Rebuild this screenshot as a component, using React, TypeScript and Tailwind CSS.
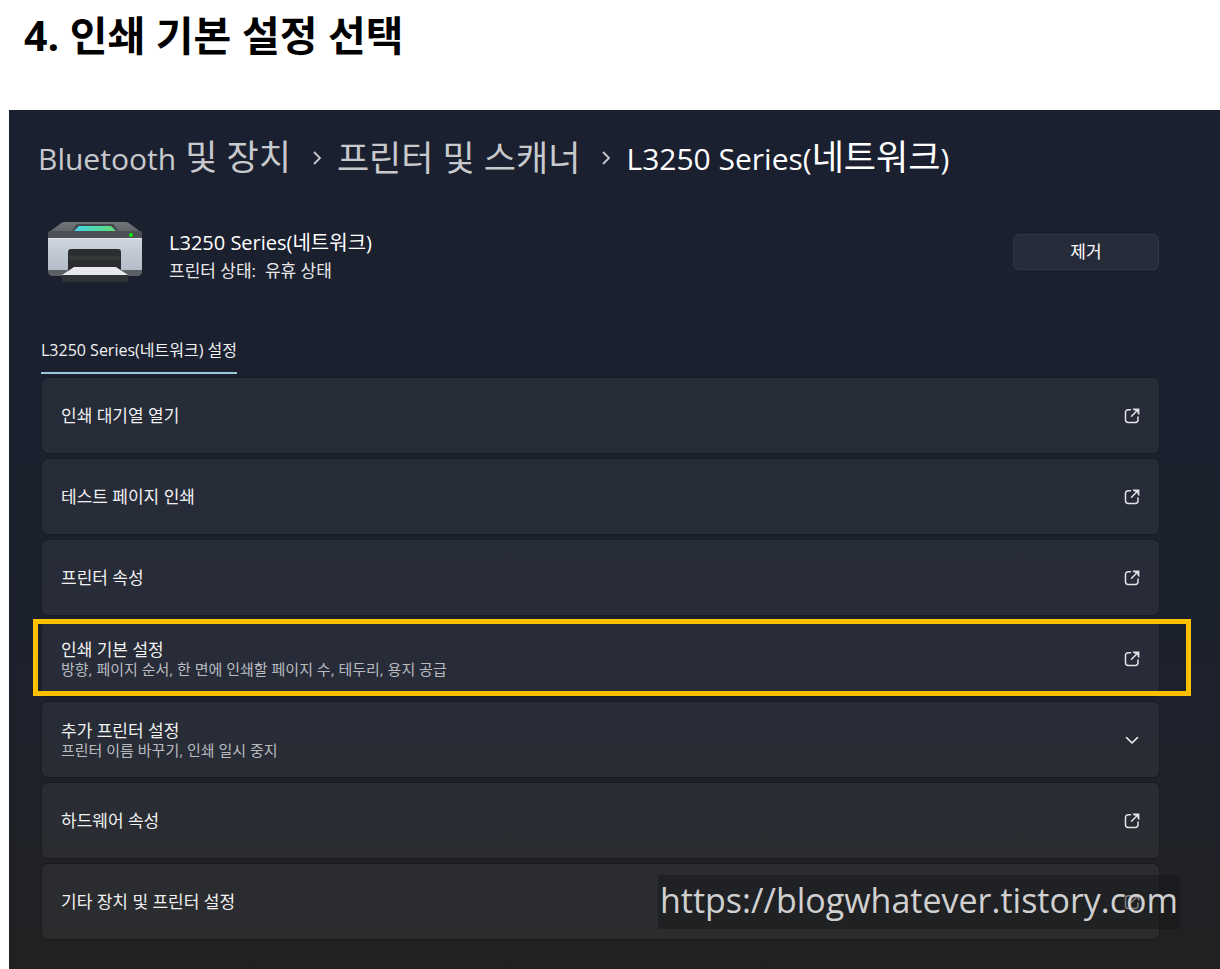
import clsx from "clsx";

interface SettingItem {
    title: string;
    description?: string;
    expandable?: boolean;
    highlighted?: boolean;
    watermark?: boolean;
}

const items: Array<SettingItem> = [
    { title: "인쇄 대기열 열기" },
    { title: "테스트 페이지 인쇄" },
    { title: "프린터 속성" },
    {
        title: "인쇄 기본 설정",
        description: "방향, 페이지 순서, 한 면에 인쇄할 페이지 수, 테두리, 용지 공급",
        highlighted: true,
    },
    {
        title: "추가 프린터 설정",
        description: "프린터 이름 바꾸기, 인쇄 일시 중지",
        expandable: true,
    },
    { title: "하드웨어 속성" },
    { title: "기타 장치 및 프린터 설정", watermark: true },
];

function OpenIcon() {
    return (
        <svg width="16" height="16" viewBox="0 0 16 16" fill="none" stroke="#e4e4e7" strokeWidth="1.5" aria-hidden="true">
            <path d="M6.5 1.7H4.2A2.7 2.7 0 0 0 1.5 4.4V11.8a2.7 2.7 0 0 0 2.7 2.7h7.1A2.7 2.7 0 0 0 14 11.8V9" strokeLinecap="round" />
            <path d="M7.5 8.2L13.5 2.2" strokeLinecap="round" />
            <path d="M8.6 .4H15.4V7L13.8 6 13.2 3.2 9.6 2.2Z" fill="#e4e4e7" stroke="none" />
        </svg>
    );
}

function ChevronIcon() {
    return (
        <svg width="16" height="16" viewBox="0 0 16 16" fill="none" stroke="currentColor" strokeWidth="1.6" strokeLinecap="round" strokeLinejoin="round" aria-hidden="true">
            <path d="M2.5 5.5L8 11l5.5-5.5" />
        </svg>
    );
}

function Separator() {
    return (
        <svg className="mr-3.5 ml-5 shrink-0" width="12" height="16" viewBox="0 0 12 16" fill="none" stroke="#c8c9cd" strokeWidth="1.8" aria-hidden="true">
            <path d="M3 2L9 8 3 14" />
        </svg>
    );
}

function PrinterIcon() {
    return (
        <svg className="shrink-0" width="94" height="62" viewBox="0 0 94 62" aria-hidden="true">
            <defs>
                <linearGradient id="lid" x1="0" y1="0" x2="0" y2="1">
                    <stop offset="0" stopColor="#72777c" />
                    <stop offset="1" stopColor="#5f6367" />
                </linearGradient>
                <linearGradient id="screen" x1="0" y1="0" x2="1" y2="0">
                    <stop offset="0" stopColor="#43d5ea" />
                    <stop offset="1" stopColor="#5fdc72" />
                </linearGradient>
                <linearGradient id="body" x1="0" y1="0" x2="0" y2="1">
                    <stop offset="0" stopColor="#cdd5de" />
                    <stop offset="1" stopColor="#b3bcc8" />
                </linearGradient>
            </defs>
            <path d="M16 1H78Q80 1 82 3L93 11H1L12 3Q14 1 16 1Z" fill="url(#lid)" />
            <path d="M30 3H64Q66 3 67 5L70 10H24L28 4Q29 3 30 3Z" fill="#44484c" />
            <path d="M31 5H63L68 10H26Z" fill="url(#screen)" />
            <path d="M2 10H92Q94 10 94 12V17H0V12Q0 10 2 10Z" fill="#4b4f53" />
            <circle cx="83" cy="14" r="2" fill="#0cf10c" />
            <path d="M0 17H94V49H0Z" fill="url(#body)" />
            <path d="M0 17H94V18H0Z" fill="#e2e7ec" />
            <path d="M0 49H94V50Q94 55 89 55H5Q0 55 0 50Z" fill="#5c6065" />
            <path d="M20 54V31Q20 28 23 28H70Q73 28 73 31V54Z" fill="#2b2d2e" />
            <path d="M21 35H72V39H21Z" fill="#343738" />
            <path d="M26 46H68L80 54H14Z" fill="#e9e8ec" />
            <path d="M14 54H80V59Q80 61 78 61H16Q14 61 14 59Z" fill="#303335" />
        </svg>
    );
}

function SettingRow({ title, description, expandable, highlighted, watermark }: SettingItem) {
    return (
        <li className="relative">
            <button
                type="button"
                className="flex min-h-[75px] w-full cursor-pointer items-center justify-between rounded-md bg-white/5 px-[19px] text-left text-[#f1f1f2] ring-1 ring-black/15"
            >
                <span className="flex flex-col">
                    <span className={clsx("text-[17px]", description ? "leading-[20px]" : "leading-[24px]")}>{title}</span>
                    {description && (
                        <span className="text-[15px] leading-[18px] text-[#b9bbc0]">{description}</span>
                    )}
                </span>
                {expandable ? <ChevronIcon /> : <OpenIcon />}
            </button>
            {highlighted && (
                <div className="pointer-events-none absolute -top-0.5 -right-8 bottom-0 -left-[9px] border-[5px] border-[#ffc000]" />
            )}
            {watermark && (
                <a
                    href="https://blogwhatever.tistory.com"
                    className="absolute top-[11px] -right-[21px] flex h-[54px] items-center bg-[#161617]/50 px-0.5 pb-1 text-[34px] leading-none whitespace-nowrap text-[#d0d0d1]"
                >
                    https://blogwhatever.tistory.com
                </a>
            )}
        </li>
    );
}

export default function App() {
    return (
        <div className="min-h-screen overflow-x-hidden bg-white font-['Open_Sans','Noto_Sans_CJK_KR',sans-serif]">
            <h1 className="flex h-[110px] items-start px-6 pt-2.5 text-[41px] leading-[50px] font-bold text-black">
                4. 인쇄 기본 설정 선택
            </h1>

            <main className="ml-[9px] min-h-[859px] bg-linear-to-b from-[#1b2030] via-[#1c212d] via-65% to-[#212122] pt-6 pr-[61px] pb-[30px] pl-[33px]">
                <nav aria-label="breadcrumb" className="-ml-1">
                    <ol className="flex h-12 items-center text-[35px] leading-[48px] whitespace-nowrap text-[#c8c9cd]">
                        <li><a href="#devices"><span className="text-[30px]">Bluetooth</span> 및 장치</a></li>
                        <li><Separator /></li>
                        <li><a href="#printers">프린터 및 스캐너</a></li>
                        <li><Separator /></li>
                        <li className="text-white" aria-current="page">
                            <span className="text-[30px]">L3250 Series(</span>네트워크<span className="text-[30px]">)</span>
                        </li>
                    </ol>
                </nav>

                <section className="mt-[38px] flex items-center pl-1.5">
                    <PrinterIcon />
                    <div className="ml-[27px] flex flex-col pt-2">
                        <h2 className="text-[20px] leading-[30px] text-white">L3250 Series(네트워크)</h2>
                        <p className="text-[17px] leading-[26px] whitespace-pre text-[#e9e9eb]">프린터 상태:  유휴 상태</p>
                    </div>
                    <button
                        type="button"
                        className="ml-auto h-9 w-[146px] cursor-pointer rounded-md border border-white/5 bg-white/5 text-[17px] text-white"
                    >
                        제거
                    </button>
                </section>

                <div className="mt-[54px] flex">
                    <h3 className="-ml-px border-b-2 border-[#9bc8da] pb-[10px] text-[16px] leading-[24px] text-[#f1f1f2]">
                        L3250 Series(네트워크) 설정
                    </h3>
                </div>

                <ul className="mt-1 flex flex-col gap-1.5">
                    {items.map((item) => (
                        <SettingRow key={item.title} {...item} />
                    ))}
                </ul>
            </main>
        </div>
    );
}
